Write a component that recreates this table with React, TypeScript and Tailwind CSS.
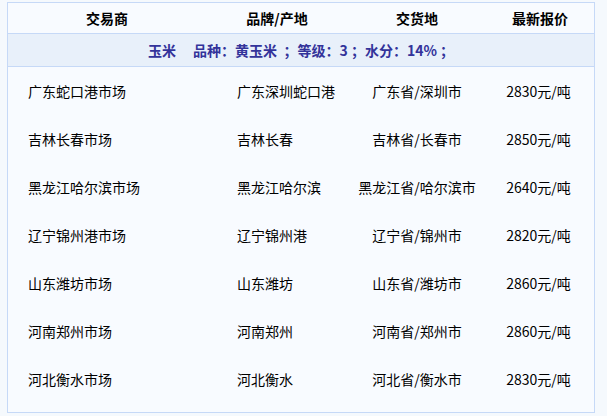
const rows = [
  ["广东蛇口港市场", "广东深圳蛇口港", "广东省/深圳市", "2830元/吨"],
  ["吉林长春市场", "吉林长春", "吉林省/长春市", "2850元/吨"],
  ["黑龙江哈尔滨市场", "黑龙江哈尔滨", "黑龙江省/哈尔滨市", "2640元/吨"],
  ["辽宁锦州港市场", "辽宁锦州港", "辽宁省/锦州市", "2820元/吨"],
  ["山东潍坊市场", "山东潍坊", "山东省/潍坊市", "2860元/吨"],
  ["河南郑州市场", "河南郑州", "河南省/郑州市", "2860元/吨"],
  ["河北衡水市场", "河北衡水", "河北省/衡水市", "2830元/吨"],
];

const cols = "grid grid-cols-[198px_142px_138px_1fr]";

export default function App() {
  return (
    <div
      className="w-[607px] h-[416px] bg-[#f5f9fd] pt-[2px] pl-[7px]"
      style={{ fontFamily: '"Noto Sans CJK SC", sans-serif' }}
    >
      <div className="w-[588px] h-[411px] border border-[#c6d9f7] bg-[#f8fbff] text-[14px] text-black">
        <div className={`${cols} h-[31px] items-center font-bold border-b border-[#c6d9f7]`}>
          <div className="text-center">交易商</div>
          <div className="text-center">品牌/产地</div>
          <div className="text-center">交货地</div>
          <div className="text-center">最新报价</div>
        </div>
        <div className="h-[33px] flex items-center justify-center bg-[#e8f0fa] border-b border-[#c6d9f7] font-bold text-[#33339a] whitespace-pre">
          玉米　 品种：黄玉米  ；等级：3 ；水分：14% ；
        </div>
        {rows.map((r) => (
          <div key={r[0]} className={`${cols} h-[48px] items-center`}>
            <div className="pl-[20px]">{r[0]}</div>
            <div className="pl-[31px]">{r[1]}</div>
            <div className="text-center">{r[2]}</div>
            <div className="text-center pr-[3px]">{r[3]}</div>
          </div>
        ))}
      </div>
    </div>
  );
}
